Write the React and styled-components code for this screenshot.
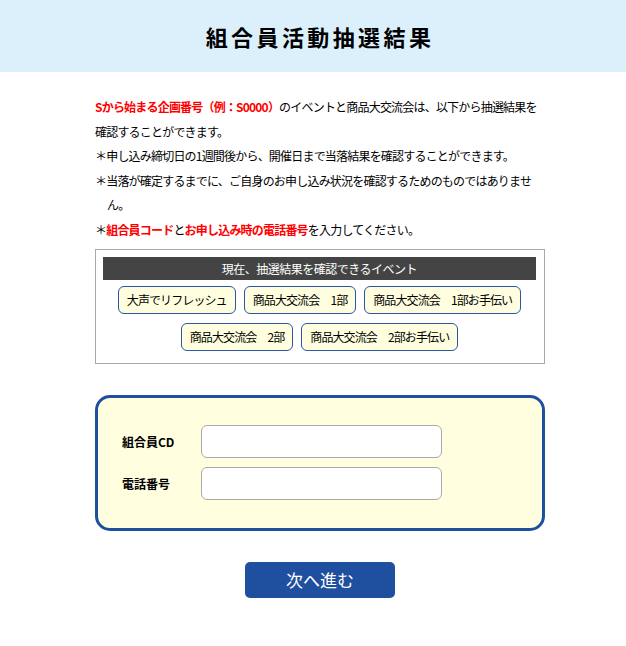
import React from "react";
import styled, { createGlobalStyle } from "styled-components";

const GlobalStyle = createGlobalStyle`
  html, body {
    margin: 0;
    padding: 0;
    background: #ffffff;
  }
  body {
    font-family: "Noto Sans CJK JP", "Noto Sans", sans-serif;
    color: #000;
  }
`;

const Header = styled.header`
  background: #dcf0fb;
  height: 72px;
  display: flex;
  align-items: center;
`;

const HeaderInner = styled.div`
  width: 450px;
  margin-left: 95px;
  text-align: center;
`;

const Title = styled.h1`
  margin: 0;
  font-size: 22px;
  font-weight: 700;
  letter-spacing: 3.4px;
  line-height: 1;
`;

const Main = styled.main`
  width: 450px;
  margin-left: 95px;
  padding-top: 23px;
  padding-bottom: 40px;
`;

const Notes = styled.div`
  font-size: 12px;
  line-height: 24.6px;
  letter-spacing: -0.8px;
`;

const Para = styled.p`
  margin: 0;
`;

const NoteLine = styled.p`
  margin: 0;
  padding-left: 12px;
  text-indent: -12px;
`;

const Em = styled.span`
  color: #ff0000;
  font-weight: 700;
`;

const EventBox = styled.section`
  margin-top: 6px;
  border: 1px solid #aaaaaa;
  padding: 7px 8px 12px 7px;
`;

const EventBar = styled.div`
  background: #444444;
  color: #fff;
  font-size: 12px;
  letter-spacing: -0.5px;
  height: 23px;
  line-height: 23px;
  text-align: center;
`;

const EventList = styled.div`
  margin-top: 6px;
  display: flex;
  flex-wrap: wrap;
  justify-content: center;
  gap: 9px 8px;
`;

const EventButton = styled.button`
  font-family: inherit;
  font-size: 12px;
  letter-spacing: -0.9px;
  height: 28px;
  padding: 0 8px;
  background: #ffffe0;
  border: 1px solid #2b55a5;
  border-radius: 6px;
  color: #000;
  cursor: pointer;
`;

const FormBox = styled.form`
  margin-top: 31px;
  border: 3px solid #1f4f9f;
  border-radius: 15px;
  background: #ffffe0;
  padding: 27px 24px 28px;
  display: flex;
  flex-direction: column;
  gap: 9px;
`;

const Row = styled.label`
  display: flex;
  align-items: center;
`;

const LabelText = styled.span`
  width: 79px;
  font-size: 12px;
  font-weight: 700;
`;

const Input = styled.input`
  width: 241px;
  height: 33px;
  box-sizing: border-box;
  border: 1px solid #aaaaaa;
  border-radius: 6px;
  background: #fff;
  font-size: 14px;
  padding: 0 8px;
`;

const Actions = styled.div`
  margin-top: 31px;
  display: flex;
  justify-content: center;
`;

const NextButton = styled.button`
  width: 150px;
  height: 36px;
  background: #1f4f9f;
  color: #fff;
  border: none;
  border-radius: 5px;
  font-family: inherit;
  font-size: 17px;
  cursor: pointer;
`;

const events = [
  "大声でリフレッシュ",
  "商品大交流会　1部",
  "商品大交流会　1部お手伝い",
  "商品大交流会　2部",
  "商品大交流会　2部お手伝い",
];

export default function App() {
  return (
    <>
      <GlobalStyle />
      <Header>
        <HeaderInner>
          <Title>組合員活動抽選結果</Title>
        </HeaderInner>
      </Header>
      <Main>
        <Notes>
          <Para>
            <Em>Sから始まる企画番号（例：S0000）</Em>のイベントと商品大交流会は、以下から抽選結果を確認することができます。
          </Para>
          <NoteLine>＊申し込み締切日の1週間後から、開催日まで当落結果を確認することができます。</NoteLine>
          <NoteLine>＊当落が確定するまでに、ご自身のお申し込み状況を確認するためのものではありません。</NoteLine>
          <NoteLine>
            ＊<Em>組合員コード</Em>と<Em>お申し込み時の電話番号</Em>を入力してください。
          </NoteLine>
        </Notes>

        <EventBox>
          <EventBar>現在、抽選結果を確認できるイベント</EventBar>
          <EventList>
            {events.map((name) => (
              <EventButton key={name} type="button">
                {name}
              </EventButton>
            ))}
          </EventList>
        </EventBox>

        <FormBox onSubmit={(e) => e.preventDefault()}>
          <Row>
            <LabelText>組合員CD</LabelText>
            <Input type="text" name="code" />
          </Row>
          <Row>
            <LabelText>電話番号</LabelText>
            <Input type="tel" name="tel" />
          </Row>
        </FormBox>

        <Actions>
          <NextButton type="button">次へ進む</NextButton>
        </Actions>
      </Main>
    </>
  );
}
